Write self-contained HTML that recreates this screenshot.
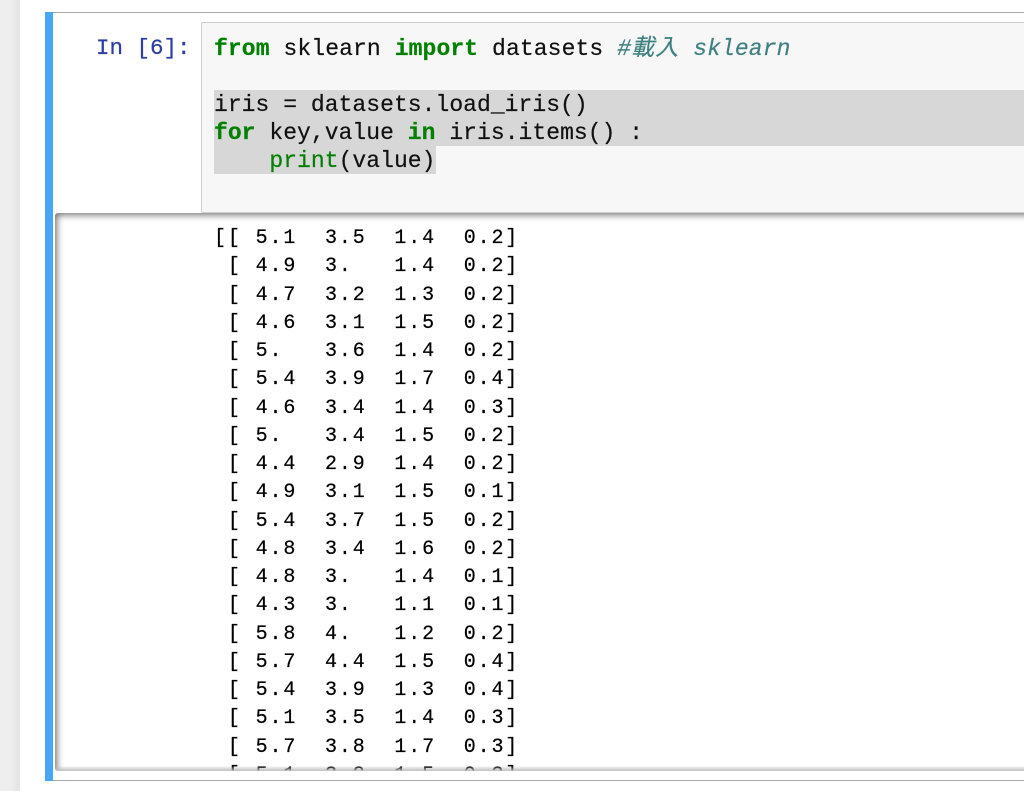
<!DOCTYPE html>
<html>
<head>
<meta charset="utf-8">
<style>
html,body{margin:0;padding:0;width:1024px;height:791px;overflow:hidden;background:#fff;}
body{position:relative;font-family:"Liberation Mono","Noto Sans CJK TC",monospace;}
.side{position:absolute;left:0;top:0;width:20px;height:791px;background:linear-gradient(to right,#eeeeee 0,#eeeeee 10px,#e4e4e4 20px);}
.cell{position:absolute;left:45px;top:12px;width:979px;height:769px;box-sizing:border-box;border-top:1px solid #a8a8a8;border-bottom:1px solid #a8a8a8;}
.bar{position:absolute;left:45px;top:12px;width:8px;height:769px;background:#47a7f5;}
.prompt{position:absolute;left:96px;top:34px;font-size:22.5px;line-height:28px;color:#303f9f;white-space:pre;-webkit-text-stroke:.25px #303f9f;}
.input{position:absolute;left:201px;top:22px;width:840px;height:191px;box-sizing:border-box;background:#f7f7f7;border:1px solid #cfcfcf;border-radius:2px;}
.sel{position:absolute;background:#d7d7d7;}
.code{position:absolute;left:214px;font-size:23px;line-height:28px;white-space:pre;color:#111;letter-spacing:.1px;-webkit-text-stroke:.2px currentColor;}
.tight{letter-spacing:.04px;}
.k{color:#008000;font-weight:bold;}
.b{color:#008000;}
.c{color:#408080;font-style:italic;}
.cj{letter-spacing:1.1px;}
.out{position:absolute;left:55px;top:213px;width:1000px;height:558px;overflow:hidden;background:#fff;border-radius:3px;isolation:isolate;box-shadow:inset 2px 2px 7px rgba(0,0,0,.55);}
.out pre{position:absolute;left:159px;top:12px;margin:0;font-family:"Liberation Mono",monospace;font-size:20px;line-height:28.25px;letter-spacing:1.87px;color:#000;-webkit-text-stroke:.2px #000;z-index:-1;}
.out:after{content:"";position:absolute;left:0;right:0;bottom:0;height:5px;background:linear-gradient(to bottom,rgba(255,255,255,0),rgba(195,195,195,.95));}
</style>
</head>
<body>
<div class="side"></div>
<div class="cell"></div>
<div class="bar"></div>
<div class="prompt">In [6]:</div>
<div class="input"></div>
<div class="sel" style="left:214px;top:90px;width:810px;height:56px;"></div>
<div class="sel" style="left:214px;top:146px;width:222px;height:28px;"></div>
<div class="code" style="top:35px;"><span class="k">from</span> sklearn <span class="k">import</span> datasets <span class="c">#<span class="cj">載入</span> sklearn</span></div>
<div class="code tight" style="top:91px;">iris = datasets.load_iris()</div>
<div class="code tight" style="top:119px;"><span class="k">for</span> key,value <span class="k">in</span> iris.items() :</div>
<div class="code tight" style="top:147px;">    <span class="b">print</span>(value)</div>
<div class="out"><pre>[[ 5.1  3.5  1.4  0.2]
 [ 4.9  3.   1.4  0.2]
 [ 4.7  3.2  1.3  0.2]
 [ 4.6  3.1  1.5  0.2]
 [ 5.   3.6  1.4  0.2]
 [ 5.4  3.9  1.7  0.4]
 [ 4.6  3.4  1.4  0.3]
 [ 5.   3.4  1.5  0.2]
 [ 4.4  2.9  1.4  0.2]
 [ 4.9  3.1  1.5  0.1]
 [ 5.4  3.7  1.5  0.2]
 [ 4.8  3.4  1.6  0.2]
 [ 4.8  3.   1.4  0.1]
 [ 4.3  3.   1.1  0.1]
 [ 5.8  4.   1.2  0.2]
 [ 5.7  4.4  1.5  0.4]
 [ 5.4  3.9  1.3  0.4]
 [ 5.1  3.5  1.4  0.3]
 [ 5.7  3.8  1.7  0.3]
 [ 5.1  3.8  1.5  0.3]</pre></div>
</body>
</html>
